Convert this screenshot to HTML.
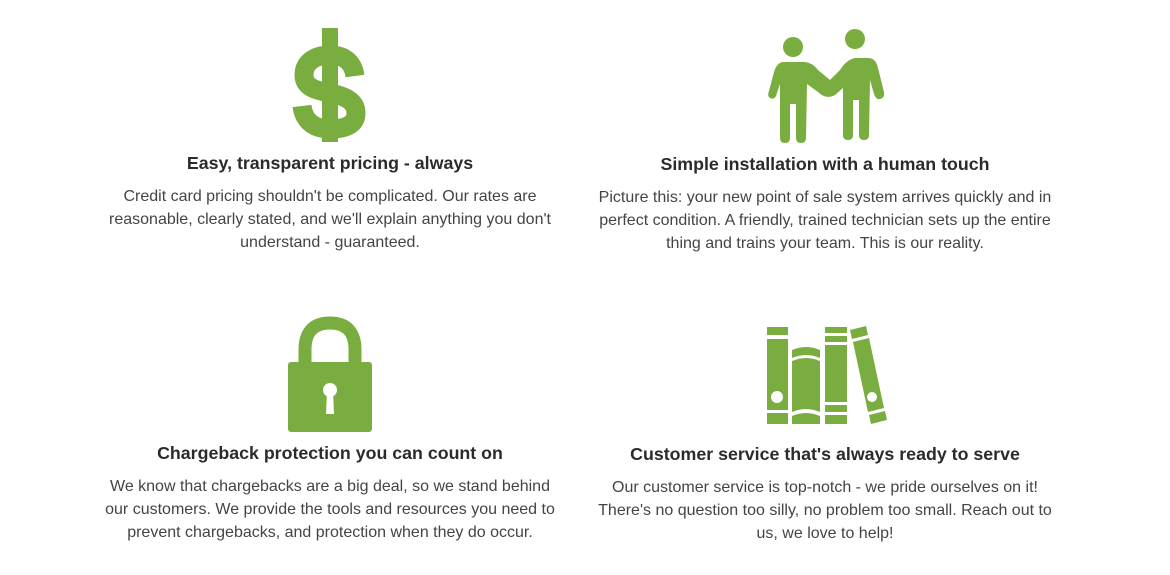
<!DOCTYPE html>
<html><head><style>
body{margin:0;width:1170px;height:575px;background:#fff;font-family:"Liberation Sans",Arial,sans-serif;position:relative;overflow:hidden}
.t{position:absolute;width:500px;text-align:center;font-weight:bold;font-size:17.8px;color:#2b2b2b}
.p{position:absolute;width:460px;text-align:center;font-size:16px;line-height:23px;color:#444}
svg{position:absolute;left:0;top:0}
</style></head><body>
<svg width="1170" height="575" fill="#7aad3f">
<rect x="322" y="28" width="16" height="114"/>
<path d="M355,76 C353,61 343,55 330,55 C314,55 304,63 304,75 C304,88 318,91 330,93 C345,96 356,101 356,113 C356,125 345,129 330,129 C315,129 304,122 302,106" fill="none" stroke="#7aad3f" stroke-width="19"/>
<circle cx="793" cy="47" r="10"/>
<circle cx="855" cy="39" r="10"/>
<path d="M784,62 L803,62 Q812,62 818,70 L830,80 L840,70 Q846,60 855,58 L868,58 Q876,58 878,68 L884,92 Q885,98 880,99 Q876,100 874,94 L870,80 L869,135 Q869,140 864,140 Q859,140 859,135 L859,100 L853,100 L853,135 Q853,140 848,140 Q843,140 843,135 L843,88 L835,95 Q826,100 818,92 L807,84 L806,138 Q806,143 801,143 Q796,143 796,138 L796,104 L790,104 L790,138 Q790,143 785,143 Q780,143 780,138 L780,84 L776,96 Q774,100 770,98 Q767,96 769,91 L774,72 Q777,62 784,62 Z"/>
<path d="M305,365 L305,350 Q305,323 330,323 Q355,323 355,350 L355,365" fill="none" stroke="#7aad3f" stroke-width="13"/>
<rect x="288" y="362" width="84" height="70" rx="3"/>
<circle cx="330" cy="390" r="7" fill="#fff"/>
<path d="M327,392 L333,392 L334,414 L326,414 Z" fill="#fff"/>
<rect x="767" y="327" width="21" height="8"/>
<rect x="767" y="339" width="21" height="71"/>
<rect x="767" y="413" width="21" height="11"/>
<circle cx="777" cy="397" r="6" fill="#fff"/>
<path d="M792,350 Q806,344 820,350 L820,358 Q806,352 792,358 Z"/>
<path d="M792,361 Q806,355 820,361 L820,412 Q806,406 792,412 Z"/>
<path d="M792,416 Q806,410 820,416 L820,424 L792,424 Z"/>
<rect x="825" y="327" width="22" height="6"/>
<rect x="825" y="336" width="22" height="6"/>
<rect x="825" y="345" width="22" height="57"/>
<rect x="825" y="405" width="22" height="7"/>
<rect x="825" y="415" width="22" height="9"/>
<path d="M850,330 L866,326 L868,335 L852,339 Z"/>
<path d="M853,342 L869,338 L884,408 L868,412 Z"/>
<circle cx="872" cy="397" r="5" fill="#fff"/>
<path d="M869,415 L885,411 L887,420 L871,424 Z"/>
</svg>
<div class="t" style="left:80px;top:153px">Easy, transparent pricing - always</div>
<div class="p" style="left:100px;top:185px">Credit card pricing shouldn't be complicated. Our rates are reasonable, clearly stated, and we'll explain anything you don't understand - guaranteed.</div>
<div class="t" style="left:575px;top:154px">Simple installation with a human touch</div>
<div class="p" style="left:595px;top:186px">Picture this: your new point of sale system arrives quickly and in perfect condition. A friendly, trained technician sets up the entire thing and trains your team. This is our reality.</div>
<div class="t" style="left:80px;top:443px">Chargeback protection you can count on</div>
<div class="p" style="left:100px;top:475px">We know that chargebacks are a big deal, so we stand behind our customers. We provide the tools and resources you need to prevent chargebacks, and protection when they do occur.</div>
<div class="t" style="left:575px;top:444px">Customer service that's always ready to serve</div>
<div class="p" style="left:595px;top:476px">Our customer service is top-notch - we pride ourselves on it! There's no question too silly, no problem too small. Reach out to us, we love to help!</div>
</body></html>
